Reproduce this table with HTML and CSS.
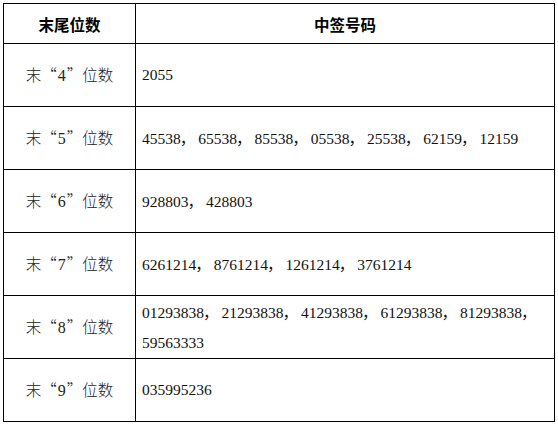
FILE: index.html
```html
<!DOCTYPE html>
<html lang="zh-CN">
<head>
<meta charset="utf-8">
<title>中签号码</title>
<link rel="stylesheet" href="styles.css">
</head>
<body>
<table class="lottery">
  <colgroup><col class="col-tail"><col class="col-num"></colgroup>
  <thead>
    <tr class="head-row"><th>末尾位数</th><th>中签号码</th></tr>
  </thead>
  <tbody>
    <tr><td class="tail">末“<span class="d">4</span>”位数</td><td class="nums">2055</td></tr>
    <tr><td class="tail">末“<span class="d">5</span>”位数</td><td class="nums">45538<span class="c">，</span>65538<span class="c">，</span>85538<span class="c">，</span>05538<span class="c">，</span>25538<span class="c">，</span>62159<span class="c">，</span>12159</td></tr>
    <tr><td class="tail">末“<span class="d">6</span>”位数</td><td class="nums">928803<span class="c">，</span>428803</td></tr>
    <tr><td class="tail">末“<span class="d">7</span>”位数</td><td class="nums">6261214<span class="c">，</span>8761214<span class="c">，</span>1261214<span class="c">，</span>3761214</td></tr>
    <tr><td class="tail">末“<span class="d">8</span>”位数</td><td class="nums">01293838<span class="c">，</span>21293838<span class="c">，</span>41293838<span class="c">，</span>61293838<span class="c">，</span>81293838<span class="c">，</span><br>59563333</td></tr>
    <tr><td class="tail">末“<span class="d">9</span>”位数</td><td class="nums">035995236</td></tr>
  </tbody>
</table>
</body>
</html>
```

FILE: styles.css
```css
html, body {
  margin: 0;
  padding: 0;
  background: #fff;
}

.lottery {
  margin: 3px 0 0 3px;
  width: 552px;
  border-collapse: collapse;
  table-layout: fixed;
}

.col-tail { width: 132px; }

.lottery th,
.lottery td {
  border: 1px solid #000;
  padding: 0;
  vertical-align: middle;
}

.head-row { height: 40px; }
.lottery tbody tr { height: 63px; }

.lottery th {
  font-family: "Noto Sans CJK SC", sans-serif;
  font-weight: bold;
  font-size: 15.5px;
  color: #000;
  text-align: center;
  line-height: 20px;
}

.tail {
  font-family: "Noto Sans CJK SC", sans-serif;
  font-weight: 300;
  font-size: 15.5px;
  color: #222;
  text-align: center;
  line-height: 20px;
}

.tail .d {
  font-family: "Liberation Serif", serif;
  font-weight: normal;
  font-size: 16px;
  padding: 0 1px;
}

.nums {
  font-family: "Liberation Serif", serif;
  font-size: 15.5px;
  color: #111;
  padding-left: 6px !important;
  line-height: 30px;
  text-align: left;
}

.nums .c {
  display: inline-block;
  width: 17.5px;
  font-family: "Noto Sans CJK SC", sans-serif;
  text-indent: -1px;
}
```
